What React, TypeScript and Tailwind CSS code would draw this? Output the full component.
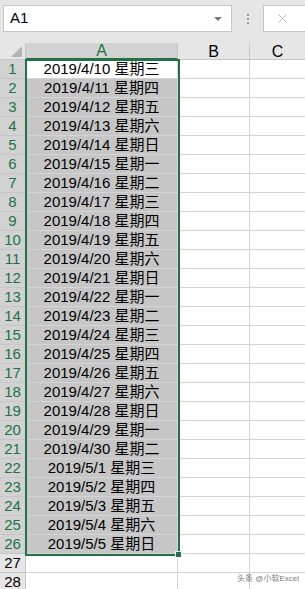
import { X } from 'lucide-react';

const days = ['日', '一', '二', '三', '四', '五', '六'];

// dates 2019/4/10 .. 2019/5/5
const buildRows = () => {
  const rows: string[] = [];
  const start = new Date(2019, 3, 10);
  for (let i = 0; i < 26; i++) {
    const d = new Date(start.getFullYear(), start.getMonth(), start.getDate() + i);
    rows.push(`${d.getFullYear()}/${d.getMonth() + 1}/${d.getDate()} 星期${days[d.getDay()]}`);
  }
  return rows;
};

const App = () => {
  const rows = buildRows();
  const font = { fontFamily: '"Liberation Sans", "Noto Sans CJK SC", sans-serif' };

  return (
    <div className="relative w-[305px] h-[589px] overflow-hidden bg-white text-black" style={font}>
      {/* Formula bar */}
      <div className="flex h-[43px] bg-[#e6e6e6] pt-[5px]">
        <div className="ml-[3px] flex h-[27px] w-[229px] items-center justify-between border border-[#c6c6c6] bg-white pl-[6px] pr-[9px]">
          <span className="text-[15px]">A1</span>
          <span className="h-0 w-0 border-x-[4px] border-t-[4px] border-x-transparent border-t-[#777]" />
        </div>
        <div className="flex w-[31px] flex-col items-center gap-[2px] pt-[9px]">
          <span className="h-[2px] w-[2px] bg-[#9a9a9a]" />
          <span className="h-[2px] w-[2px] bg-[#9a9a9a]" />
          <span className="h-[2px] w-[2px] bg-[#9a9a9a]" />
        </div>
        <div className="flex h-[27px] flex-1 items-center border border-r-0 border-[#c6c6c6] bg-white pl-[11px]">
          <X size={15} strokeWidth={1.5} className="text-[#b8b8b8]" />
        </div>
      </div>

      {/* Grid */}
      <div className="grid grid-cols-[26px_152px_72px_1fr] text-[15px]">
        <div className="relative h-[17px] border-b border-r border-[#c6c6c6] bg-[#e6e6e6]">
          <span className="absolute bottom-[2px] right-[3px] h-0 w-0 border-b-[11px] border-l-[11px] border-b-[#b4b4b4] border-l-transparent" />
        </div>
        <div className="flex h-[17px] items-center justify-center border-b-2 border-r border-b-[#217346] border-r-[#c6c6c6] bg-[#d2d2d2] pt-[1px] text-[16px] leading-none text-[#217346]">A</div>
        <div className="flex h-[17px] items-center justify-center border-b border-r border-[#c6c6c6] bg-[#e6e6e6] pt-[1px] text-[16px] leading-none">B</div>
        <div className="flex h-[17px] items-center justify-center border-b border-[#c6c6c6] bg-[#e6e6e6] pt-[1px] text-[16px] leading-none">C</div>

        {rows.map((text, i) => (
          <div key={i} className="contents">
            <div className="flex h-[19px] items-center justify-center border-b border-r border-[#c6c6c6] border-r-[#217346] bg-[#d2d2d2] text-[#217346]">
              {i + 1}
            </div>
            <div
              className={`flex h-[19px] items-center justify-center border-b border-r border-[#d4d4d4] ${
                i === 0 ? 'bg-white' : 'bg-[#c6c6c6]'
              }`}
            >
              {text}
            </div>
            <div className="h-[19px] border-b border-r border-[#d4d4d4]" />
            <div className="h-[19px] border-b border-[#d4d4d4]" />
          </div>
        ))}

        {[27, 28].map((n) => (
          <div key={n} className="contents">
            <div className="flex h-[19px] items-center justify-center border-b border-r border-[#c6c6c6] bg-[#e6e6e6]">{n}</div>
            <div className="h-[19px] border-b border-r border-[#d4d4d4]" />
            <div className="h-[19px] border-b border-r border-[#d4d4d4]" />
            <div className="h-[19px] border-b border-[#d4d4d4]" />
          </div>
        ))}
      </div>

      {/* Selection outline + fill handle */}
      <div className="pointer-events-none absolute left-[25px] top-[59px] h-[497px] w-[155px] border-2 border-[#217346]" />
      <div className="absolute left-[175px] top-[551px] h-[7px] w-[7px] border border-white bg-[#217346]" />

      {/* Watermark */}
      <div className="absolute right-[6px] top-[575px] whitespace-nowrap text-[8px] leading-none text-[#7a7a7a]">头条 @小软Excel</div>
    </div>
  );
};

export default App;
